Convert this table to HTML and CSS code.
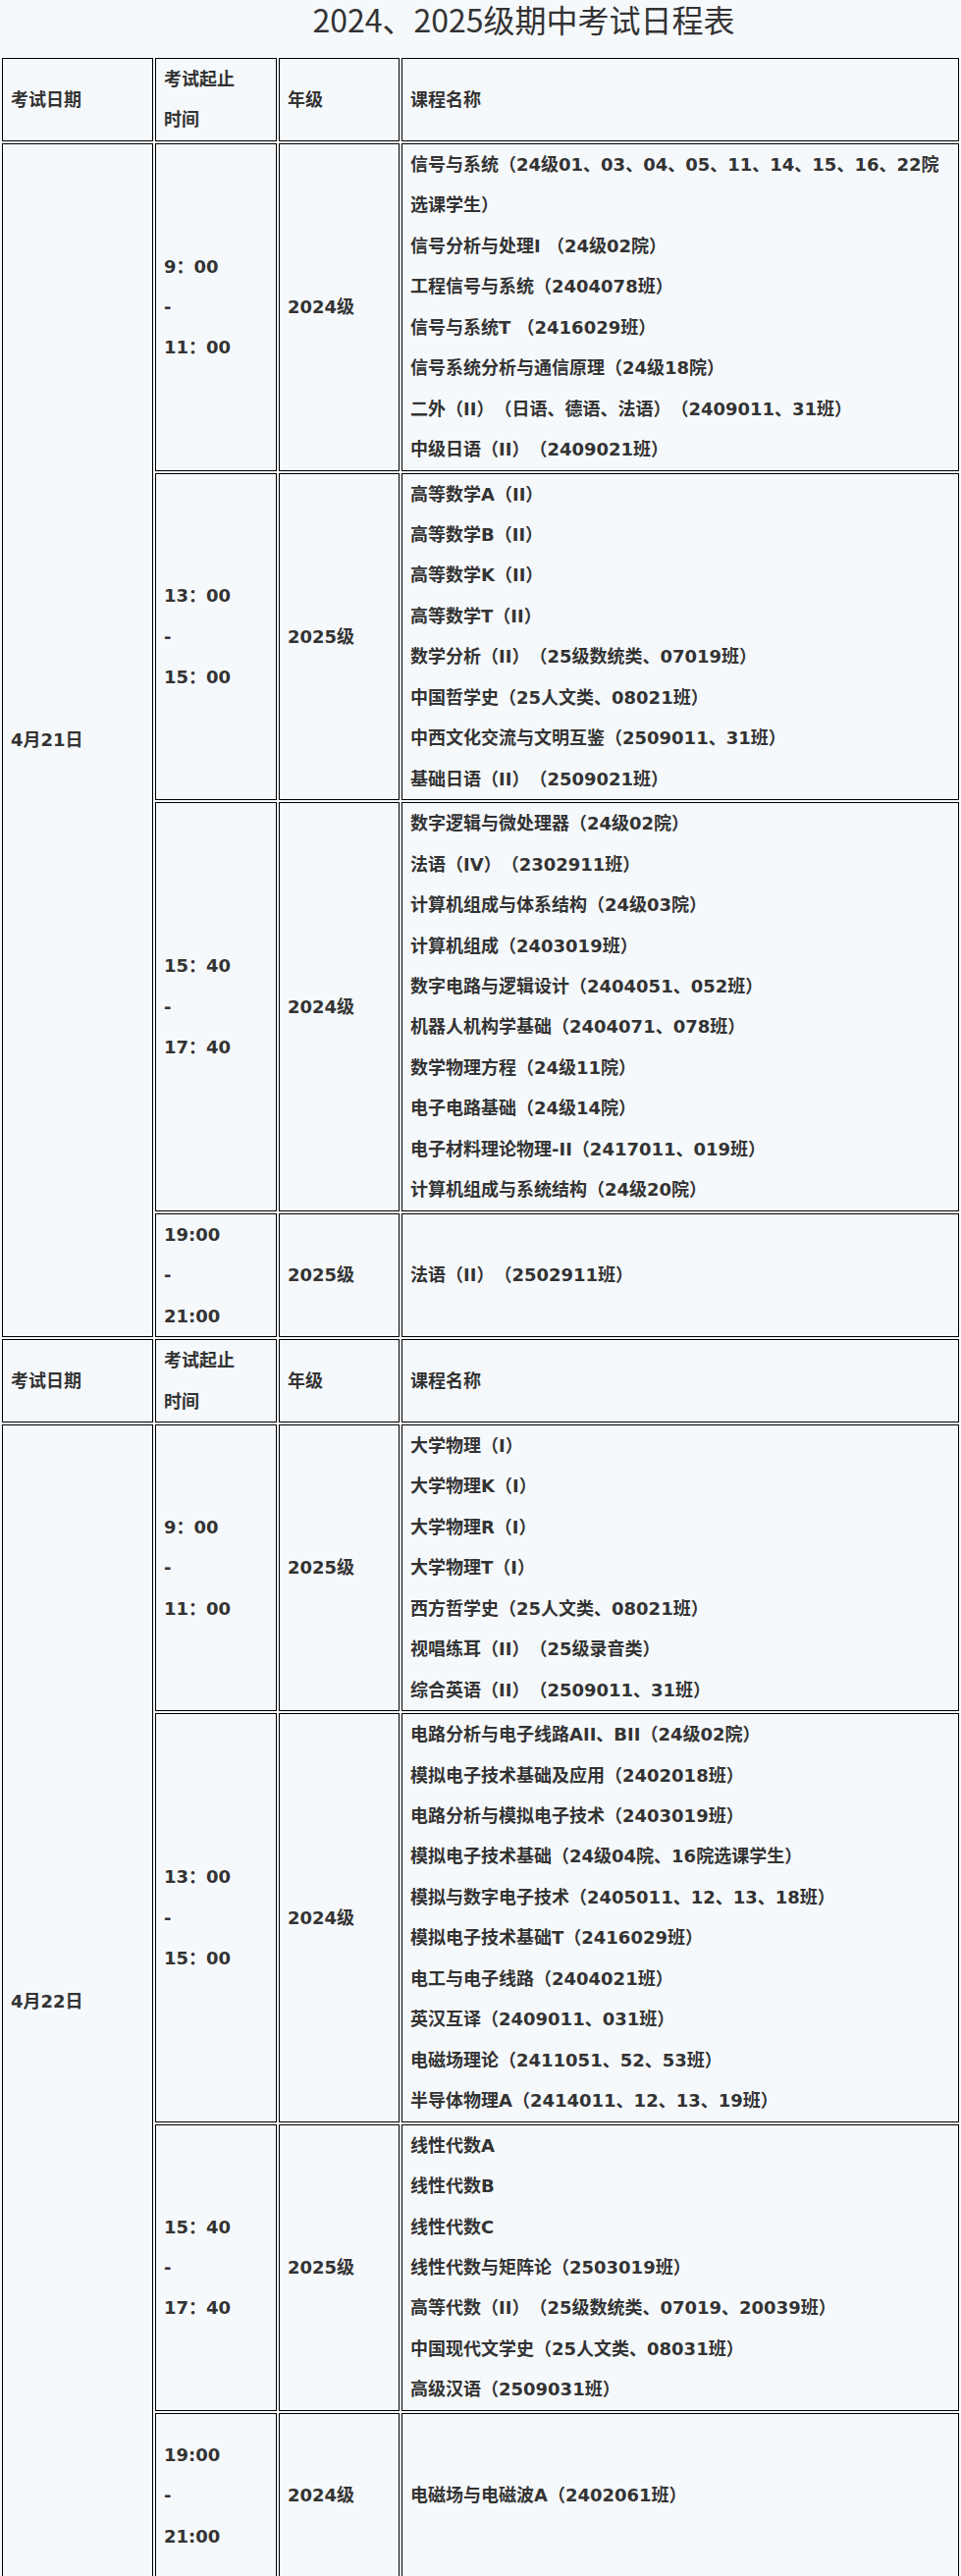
FILE: index.html
```html
<!DOCTYPE html>
<html lang="zh-CN">
<head>
<meta charset="utf-8">
<title>2024、2025级期中考试日程表</title>
<link rel="stylesheet" href="styles.css">
</head>
<body>
<h1 class="title">2024、2025级期中考试日程表</h1>
<table class="schedule">
  <tr class="head">
    <td class="w-date">考试日期</td>
    <td class="w-time">考试起止<br>时间</td>
    <td class="w-grade">年级</td>
    <td>课程名称</td>
  </tr>
  <tr>
    <td rowspan="4">4月21日</td>
    <td>9：00<br>-<br>11：00</td>
    <td>2024级</td>
    <td>
      <p>信号与系统（24级01、03、04、05、11、14、15、16、22院选课学生）</p>
      <p>信号分析与处理I （24级02院）</p>
      <p>工程信号与系统（2404078班）</p>
      <p>信号与系统T （2416029班）</p>
      <p>信号系统分析与通信原理（24级18院）</p>
      <p>二外（II）（日语、德语、法语）（2409011、31班）</p>
      <p>中级日语（II）（2409021班）</p>
    </td>
  </tr>
  <tr>
    <td>13：00<br>-<br>15：00</td>
    <td>2025级</td>
    <td>
      <p>高等数学A（II）</p>
      <p>高等数学B（II）</p>
      <p>高等数学K（II）</p>
      <p>高等数学T（II）</p>
      <p>数学分析（II）（25级数统类、07019班）</p>
      <p>中国哲学史（25人文类、08021班）</p>
      <p>中西文化交流与文明互鉴（2509011、31班）</p>
      <p>基础日语（II）（2509021班）</p>
    </td>
  </tr>
  <tr>
    <td>15：40<br>-<br>17：40</td>
    <td>2024级</td>
    <td>
      <p>数字逻辑与微处理器（24级02院）</p>
      <p>法语（IV）（2302911班）</p>
      <p>计算机组成与体系结构（24级03院）</p>
      <p>计算机组成（2403019班）</p>
      <p>数字电路与逻辑设计（2404051、052班）</p>
      <p>机器人机构学基础（2404071、078班）</p>
      <p>数学物理方程（24级11院）</p>
      <p>电子电路基础（24级14院）</p>
      <p>电子材料理论物理-II（2417011、019班）</p>
      <p>计算机组成与系统结构（24级20院）</p>
    </td>
  </tr>
  <tr>
    <td>19:00<br>-<br>21:00</td>
    <td>2025级</td>
    <td><p>法语（II）（2502911班）</p></td>
  </tr>
  <tr class="head">
    <td>考试日期</td>
    <td>考试起止<br>时间</td>
    <td>年级</td>
    <td>课程名称</td>
  </tr>
  <tr>
    <td rowspan="4">4月22日</td>
    <td>9：00<br>-<br>11：00</td>
    <td>2025级</td>
    <td>
      <p>大学物理（I）</p>
      <p>大学物理K（I）</p>
      <p>大学物理R（I）</p>
      <p>大学物理T（I）</p>
      <p>西方哲学史（25人文类、08021班）</p>
      <p>视唱练耳（II）（25级录音类）</p>
      <p>综合英语（II）（2509011、31班）</p>
    </td>
  </tr>
  <tr>
    <td>13：00<br>-<br>15：00</td>
    <td>2024级</td>
    <td>
      <p>电路分析与电子线路AII、BII（24级02院）</p>
      <p>模拟电子技术基础及应用（2402018班）</p>
      <p>电路分析与模拟电子技术（2403019班）</p>
      <p>模拟电子技术基础（24级04院、16院选课学生）</p>
      <p>模拟与数字电子技术（2405011、12、13、18班）</p>
      <p>模拟电子技术基础T（2416029班）</p>
      <p>电工与电子线路（2404021班）</p>
      <p>英汉互译（2409011、031班）</p>
      <p>电磁场理论（2411051、52、53班）</p>
      <p>半导体物理A（2414011、12、13、19班）</p>
    </td>
  </tr>
  <tr>
    <td>15：40<br>-<br>17：40</td>
    <td>2025级</td>
    <td>
      <p>线性代数A</p>
      <p>线性代数B</p>
      <p>线性代数C</p>
      <p>线性代数与矩阵论（2503019班）</p>
      <p>高等代数（II）（25级数统类、07019、20039班）</p>
      <p>中国现代文学史（25人文类、08031班）</p>
      <p>高级汉语（2509031班）</p>
    </td>
  </tr>
  <tr class="tall">
    <td>19:00<br>-<br>21:00</td>
    <td>2024级</td>
    <td><p>电磁场与电磁波A（2402061班）</p></td>
  </tr>
</table>
</body>
</html>
```

FILE: styles.css
```css
* {
  box-sizing: border-box;
}

html,
body {
  margin: 0;
  padding: 0;
  background: #f6f9fc;
}

body {
  font-family: "DejaVu Sans", "Noto Sans CJK SC", sans-serif;
  color: #333;
}

.title {
  margin: 0 0 19px;
  padding-left: 88px;
  text-align: center;
  font-family: "Noto Sans CJK SC", sans-serif;
  font-size: 32px;
  line-height: 38px;
  font-weight: 400;
  color: #333;
}

.schedule {
  width: 979px;
  border-collapse: separate;
  border-spacing: 2px;
  table-layout: fixed;
  font-family: "DejaVu Sans", "Noto Sans CJK SC", sans-serif;
  font-size: 18px;
  line-height: 41.45px;
  font-weight: 700;
  text-spacing-trim: space-all;
  color: #333;
}

.schedule td {
  border: 1px solid #000;
  padding: 0 8px;
  vertical-align: middle;
  text-align: left;
}

.w-date {
  width: 154px;
}

.w-time {
  width: 124px;
}

.w-grade {
  width: 123px;
}

.schedule p {
  margin: 0;
}

.tall {
  height: 168px;
}
```
